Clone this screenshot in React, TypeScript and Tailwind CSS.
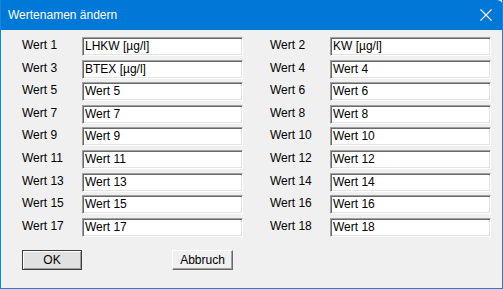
const rows: [string, string, string, string][] = [
  ["Wert 1", "LHKW [µg/l]", "Wert 2", "KW [µg/l]"],
  ["Wert 3", "BTEX [µg/l]", "Wert 4", "Wert 4"],
  ["Wert 5", "Wert 5", "Wert 6", "Wert 6"],
  ["Wert 7", "Wert 7", "Wert 8", "Wert 8"],
  ["Wert 9", "Wert 9", "Wert 10", "Wert 10"],
  ["Wert 11", "Wert 11", "Wert 12", "Wert 12"],
  ["Wert 13", "Wert 13", "Wert 14", "Wert 14"],
  ["Wert 15", "Wert 15", "Wert 16", "Wert 16"],
  ["Wert 17", "Wert 17", "Wert 18", "Wert 18"],
];

function Field({ label, value }: { label: string; value: string }) {
  return (
    <div className="flex items-center">
      <div className="w-[60px] -mt-[3px] text-[12px] text-black">{label}</div>
      <div className="h-[19px] w-[161px] border border-t-[#a0a0a0] border-l-[#a0a0a0] border-b-white border-r-white bg-white shadow-[inset_1px_1px_0_#696969,inset_-1px_-1px_0_#e3e3e3] pl-[2px] text-[12px] leading-[17px] text-black">
        {value}
      </div>
    </div>
  );
}

export default function App() {
  return (
    <div className="w-[503px] h-[289px] flex flex-col bg-[#f0f0f0] border-x border-b border-[#1883d7] font-['Liberation_Sans',Arial,sans-serif] overflow-hidden">
      <div className="h-[30px] shrink-0 -mx-px bg-[#0078d7] flex items-center justify-between pl-[8px] pr-[10px] rounded-tr-[6px]">
        <span className="text-[12px] text-white">Wertenamen ändern</span>
        <svg width="12" height="12" viewBox="0 0 12 12" className="mr-[1px]">
          <path d="M0.5 0.5 L11.5 11.5 M11.5 0.5 L0.5 11.5" stroke="white" strokeWidth="1.1" />
        </svg>
      </div>

      <div className="pt-[7px] pl-[21px] grid grid-cols-[221px_221px] gap-x-[27px] gap-y-[3.6px]">
        {rows.map(([l1, v1, l2, v2]) => (
          <div key={l1} className="contents">
            <Field label={l1} value={v1} />
            <Field label={l2} value={v2} />
          </div>
        ))}
      </div>

      <div className="mt-[13px] pl-[21px] flex">
        <button className="w-[60px] h-[20px] border border-[#3c3c3c] bg-[#e1e1e1] shadow-[inset_1px_1px_0_#ffffff,inset_-1px_-1px_0_#a0a0a0] text-[12px] leading-[18px] text-black">
          OK
        </button>
        <button className="ml-[90px] w-[61px] h-[20px] border border-t-white border-l-white border-b-[#696969] border-r-[#696969] bg-[#f0f0f0] shadow-[inset_-1px_-1px_0_#a0a0a0] text-[12px] leading-[18px] text-black">
          Abbruch
        </button>
      </div>
    </div>
  );
}
